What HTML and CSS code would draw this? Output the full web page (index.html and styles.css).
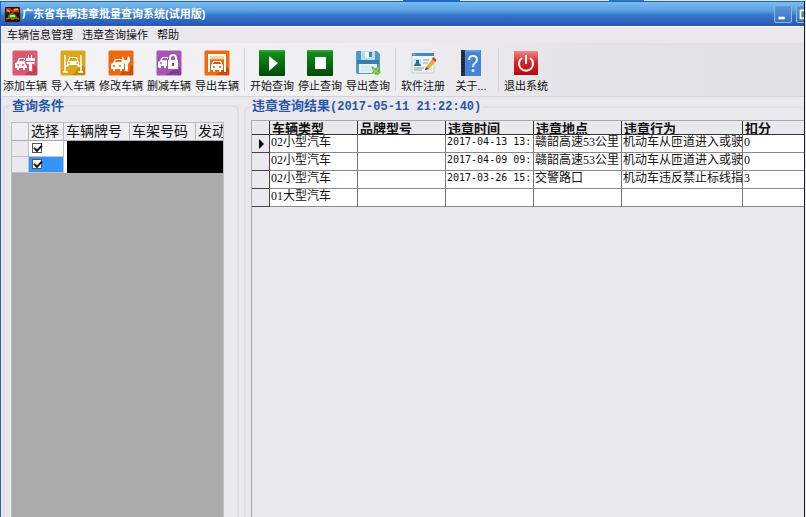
FILE: index.html
```html
<!DOCTYPE html>
<html lang="zh-CN">
<head>
<meta charset="utf-8">
<title>广东省车辆违章批量查询系统(试用版)</title>
<link rel="stylesheet" href="styles.css">
</head>
<body>
<div class="desktop"><i class="tile"></i><i class="tile tile-small"></i></div>
<div class="window">
  <header class="titlebar">
    <svg class="logo" viewBox="0 0 15 15"><rect width="15" height="15" rx="1" fill="#25160a"/><path d="M1 1h4l2 2 3-2 4 1v4l-3-1-3 1-3-2-4 2z" fill="#d52a16"/><path d="M2 3l3 2M9 3l4-1" stroke="#ffb51f" stroke-width="1.5"/><path d="M3 10q1-4 4-4t5 4l-1 2H4z" fill="#2f9a22"/><path d="M5 8h5v2H5z" fill="#d9df55"/><path d="M1 12l3-1M11 11l3 1M6 12h3" stroke="#e44720" stroke-width="1.5"/></svg>
    <h1>广东省车辆违章批量查询系统(试用版)</h1>
    <div class="controls">
      <button class="ctl" aria-label="最小化"><svg viewBox="0 0 18 18"><path d="M4 12h7v3H4z" fill="#fff"/></svg></button>
      <button class="ctl" aria-label="最大化"><svg viewBox="0 0 18 18"><path d="M4 5h10v9H4z" fill="none" stroke="#fff" stroke-width="2"/></svg></button>
    </div>
  </header>
  <nav class="menu"><button>车辆信息管理</button><button>违章查询操作</button><button>帮助</button></nav>
  <div class="toolbar">
    <button class="tool"><svg viewBox="0 0 26 26"><rect x=".5" y=".5" width="25" height="25" rx="1.500" fill="#df5871"/><path d="M13 25l9-11 3 4v7z" fill="#bb4058"/><path d="M3 18v-5l2-1 2-4h6l2 4v6h-2v2h-2v-2H7v2H5v-2z" fill="#fff"/><path d="M7 11l1-2h4l1 2z" fill="#df5871"/><circle cx="6" cy="15" r="1" fill="#df5871"/><circle cx="11" cy="15" r="1" fill="#df5871"/><path d="M13 5h11v8q0 3-3 3v6h-4v-6q-4 0-4-3z" fill="#df5871"/><path d="M14 11V8h2V5h1v3h2V5h1v3h3v3H14zM14 12h9l-1 2h-2v7h-3v-7h-2z" fill="#fff"/></svg><span>添加车辆</span></button>
    <button class="tool"><svg viewBox="0 0 26 26"><rect x=".5" y=".5" width="25" height="25" rx="1.500" fill="#dda719"/><path d="M12 25l10-10 3 3v7z" fill="#b98916"/><path d="M5 5v17M21 5v17M3 22h5M18 22h5M5 16h3M18 16h3" stroke="#fff" stroke-width="1.500"/><path d="M8 11l1-4h8l1 4 1 1v4h-2v-1H9v1H7v-4z" fill="#fff"/><path d="M10 8h6l1 3H9z" fill="#dda719"/><circle cx="9" cy="13" r="1" fill="#dda719"/><circle cx="17" cy="13" r="1" fill="#dda719"/></svg><span>导入车辆</span></button>
    <button class="tool"><svg viewBox="0 0 26 26"><rect x=".5" y=".5" width="25" height="25" rx="1.500" fill="#f06a0d"/><path d="M12 25l9-12 4 4v8z" fill="#cb4d08"/><path d="M3 19v-5l2-1 2-4h7l2 4v6h-2v2h-2v-2H7v2H5v-2z" fill="#fff"/><path d="M7 12l1-2h5l1 2z" fill="#f06a0d"/><circle cx="6" cy="16" r="1" fill="#f06a0d"/><circle cx="12" cy="16" r="1" fill="#f06a0d"/><path d="M14 6h9v8l-2 8h-5v-8z" fill="#f06a0d"/><path d="M15 6l1 4h3l1-4 2 2v3l-2 3v7h-3v-7l-3-3V8z" fill="#fff"/></svg><span>修改车辆</span></button>
    <button class="tool"><svg viewBox="0 0 26 26"><rect x=".5" y=".5" width="25" height="25" rx="1.500" fill="#a456b5"/><path d="M10 25l12-9 3 2v7z" fill="#823b96"/><path d="M2 17v-5l2-1 2-4h6v9h-2v2H8v-2H5v2H3z" fill="#fff"/><path d="M6 10l1-2h4v2z" fill="#a456b5"/><circle cx="5" cy="13" r="1" fill="#a456b5"/><path d="M11 9h12v11H11z" fill="#a456b5"/><path d="M14 12V8a3 3 0 0 1 6 0v4" fill="none" stroke="#fff" stroke-width="2"/><rect x="12" y="10" width="10" height="9" fill="#fff"/><path d="M16 13h2v3h-2z" fill="#823b96"/></svg><span>删减车辆</span></button>
    <button class="tool"><svg viewBox="0 0 26 26"><rect x=".5" y=".5" width="25" height="25" rx="1.500" fill="#f06a0d"/><path d="M12 25l10-8 3 2v6z" fill="#c94b0a"/><path d="M4 4h18v18h-2V9H6v13H4z" fill="#fff"/><path d="M6 7h14M6 9h14" stroke="#f5a568"/><path d="M7 15l1-1 1-3h8l1 3 1 1v5h-2v2h-2v-2h-4v2H9v-2H7z" fill="#fff"/><path d="M10 12h6l1 2H9z" fill="#d95a0a"/><circle cx="10" cy="17" r="1" fill="#d95a0a"/><circle cx="16" cy="17" r="1" fill="#d95a0a"/></svg><span>导出车辆</span></button>
    <i class="sep"></i>
    <button class="tool"><svg viewBox="0 0 26 26"><defs><linearGradient id="green" x2="0" y2="1"><stop stop-color="#149318"/><stop offset=".5" stop-color="#087010"/><stop offset="1" stop-color="#03480a"/></linearGradient></defs><rect width="26" height="26" rx="1" fill="url(#green)"/><path d="M1 1h24" stroke="#50b252"/><path d="M10 6l9 7-9 8z" fill="#fff"/></svg><span>开始查询</span></button>
    <button class="tool"><svg viewBox="0 0 26 26"><rect width="26" height="26" rx="1" fill="url(#green)"/><path d="M1 1h24" stroke="#50b252"/><path d="M8 7h11v12H8z" fill="#fff"/></svg><span>停止查询</span></button>
    <button class="tool"><svg viewBox="0 0 26 26"><path d="M2 1h20l3 3v18q0 2-2 2H3q-2 0-2-2V2z" fill="#4a9cc9"/><path d="M2 10h22v4H2z" fill="#327fac"/><path d="M6 1h14v8q0 1-1 1H7q-1 0-1-1z" fill="#b8dceb"/><path d="M10 2h7v6h-7z" fill="#f7fbfd"/><path d="M14 2h3v5h-3z" fill="#3c87b5"/><path d="M4 14h18v9H4z" fill="#e6f1f5"/><path d="M6 17h13M6 20h11" stroke="#c4dce5"/><path d="M16 16l4 2 4-1v4l2 1-3 3-4-1h-3l2-3z" fill="#78ba3e"/><path d="M18 19l5 4M23 18l-5 6" stroke="#a9d67c"/></svg><span>导出查询</span></button>
    <i class="sep"></i>
    <button class="tool"><svg viewBox="0 0 26 26"><path d="M2 4h22v19H2z" fill="#eff5f8" stroke="#b9cdd8"/><path d="M2 3h22v3H2z" fill="#378fc6"/><circle cx="4" cy="4.500" r="1" fill="#efb43e"/><path d="M4 9h7v7H4z" fill="#bfdef0"/><path d="M6 10h3v3l2 2v1H4v-1l2-2z" fill="#27729f"/><path d="M13 10h6M13 13h5M4 18h10M4 20h8" stroke="#899ca8"/><path d="M16 17l7-9 3 3-7 8-4 1z" fill="#efad2c"/><path d="M22 9l1-2 3 2v2l-1 1z" fill="#dc3c3c"/><path d="M16 17l3 2-4 1z" fill="#504c47"/></svg><span>软件注册</span></button>
    <button class="tool"><svg viewBox="0 0 26 26"><path d="M3 0h20v26H3z" fill="#4583d7"/><path d="M3 0h4v26H3z" fill="#263042"/><path d="M4 3h2M4 6h2M4 9h2M4 12h2M4 15h2M4 18h2M4 21h2" stroke="#111927"/><path d="M7 1h15" stroke="#87afe6"/><path d="M11 10q0-4 4-4t4 4q0 2-3 4-1 1-1 3" fill="none" stroke="#e7f2ff" stroke-width="2"/><circle cx="15" cy="20.500" r="1.500" fill="#e7f2ff"/></svg><span>关于...</span></button>
    <i class="sep"></i>
    <button class="tool"><svg viewBox="0 0 26 26"><defs><linearGradient id="red" x2="0" y2="1"><stop stop-color="#ef8a86"/><stop offset=".45" stop-color="#d9262a"/><stop offset="1" stop-color="#bd050b"/></linearGradient></defs><path d="M1 1h24v24H1z" fill="url(#red)"/><path d="M9 8a7 7 0 1 0 8 0" fill="none" stroke="#fff" stroke-width="2"/><path d="M13 5v9" stroke="#fff" stroke-width="2"/></svg><span>退出系统</span></button>
  </div>
  <main class="content">
    <fieldset class="panel conditions">
      <legend>查询条件</legend>
      <div class="vehicle-list">
        <table class="vehicles">
          <colgroup><col class="v-mark"><col class="v-pick"><col class="v-info"><col class="v-info"><col></colgroup>
          <thead><tr><th></th><th>选择</th><th>车辆牌号</th><th>车架号码</th><th>发动</th></tr></thead>
          <tbody>
            <tr><td class="rowhead"></td><td><input type="checkbox" checked aria-label="选择第一辆"></td><td class="masked" colspan="3"></td></tr>
            <tr><td class="rowhead"></td><td class="selected"><input type="checkbox" checked aria-label="选择第二辆"></td><td class="masked" colspan="3"></td></tr>
          </tbody>
        </table>
      </div>
    </fieldset>
    <fieldset class="panel results">
      <legend>违章查询结果<span class="stamp">(2017-05-11 21:22:40)</span></legend>
      <div class="result-list">
        <table class="violations">
          <colgroup><col class="r-mark"><col class="r-std"><col class="r-std"><col class="r-std"><col class="r-std"><col class="r-act"><col></colgroup>
          <thead><tr><th></th><th><span>车辆类型</span></th><th><span>品牌型号</span></th><th><span>违章时间</span></th><th><span>违章地点</span></th><th><span>违章行为</span></th><th><span>扣分</span></th></tr></thead>
          <tbody>
            <tr><td class="rowhead"><i class="current"></i></td><td>02小型汽车</td><td></td><td class="time">2017-04-13 13:</td><td>赣韶高速53公里</td><td>机动车从匝道进入或驶</td><td>0</td></tr>
            <tr><td class="rowhead"></td><td>02小型汽车</td><td></td><td class="time">2017-04-09 09:</td><td>赣韶高速53公里</td><td>机动车从匝道进入或驶</td><td>0</td></tr>
            <tr><td class="rowhead"></td><td>02小型汽车</td><td></td><td class="time">2017-03-26 15:</td><td>交警路口</td><td>机动车违反禁止标线指</td><td>3</td></tr>
            <tr><td class="rowhead"></td><td>01大型汽车</td><td></td><td></td><td></td><td></td><td></td></tr>
          </tbody>
        </table>
      </div>
    </fieldset>
  </main>
</div>
</body>
</html>
```
FILE: styles.css
```css
* { box-sizing: border-box; }
body {
  margin: 0;
  height: 100vh;
  display: flex;
  flex-direction: column;
  overflow: hidden;
  background: #e9e8ed;
  color: #111;
  font: 11px/14px "Liberation Sans", "Noto Sans CJK SC", sans-serif;
}
button { border: 0; padding: 0; background: none; font: inherit; color: inherit; }
svg { display: block; }

.desktop { flex: none; height: 1px; display: flex; background: #d8e8f2; }
.tile { width: 57px; margin-left: 50%; background: #1668df; }
.tile-small { width: 35px; margin-left: 149px; background: #1287d8; }

.window {
  flex: 1;
  min-height: 0;
  display: flex;
  flex-direction: column;
  margin-right: 1px;
  border-left: 1px solid #2a60bb;
  border-right: 1px solid #181a20;
}

.titlebar {
  flex: none;
  height: 25px;
  display: flex;
  align-items: center;
  gap: 2px;
  padding-left: 4px;
  overflow: hidden;
  border-top: 1px solid #2c63a8;
  background: linear-gradient(#79bcef, #5ba2e4 35%, #3478cb 55%, #2a55b0);
}
.logo { width: 15px; height: 15px; }
.titlebar h1 {
  flex: 1;
  margin: 0;
  color: #fff;
  font-size: 11px;
  line-height: 16px;
  white-space: nowrap;
}
.controls { display: flex; gap: 4px; margin-right: -10px; }
.ctl {
  width: 18px;
  height: 18px;
  border: 1px solid #8fb9e8;
  border-radius: 2px;
  background: linear-gradient(#5d98d9, #3b70c1);
}
.ctl svg { width: 16px; height: 16px; }

.menu {
  flex: none;
  height: 17px;
  display: flex;
  gap: 9px;
  padding-left: 6px;
  border-top: 1px solid #f8f8fa;
  background: #eae8ed;
}

.toolbar {
  flex: none;
  height: 54px;
  display: flex;
  align-items: stretch;
  border-bottom: 1px solid #d5d4d9;
  background: linear-gradient(90deg, #f4f4f6, #efeef1 45%, #e3e3e7 75%, #e2e2e6);
}
.tool {
  width: 48px;
  display: flex;
  flex-direction: column;
  align-items: center;
  gap: 3px;
  padding-top: 7px;
  white-space: nowrap;
}
.tool svg { width: 26px; height: 26px; }
.sep { width: 1px; margin: 5px 3px; background: #d2d2d7; }

.content { flex: 1; min-height: 0; display: flex; gap: 5px; padding: 2px 0 0 2px; }
.panel {
  display: flex;
  flex-direction: column;
  min-width: 0;
  margin: 0;
  padding: 0;
  border: 2px solid #e0dfe5;
  border-bottom: 0;
  border-radius: 5px 5px 0 0;
}
.panel legend {
  margin-left: 0;
  padding: 0 1px;
  color: #2856a8;
  font-size: 13px;
  font-weight: bold;
  line-height: 14px;
}
.stamp { font-family: "Liberation Mono", monospace; font-size: 12px; }
.conditions { flex: none; width: 236px; padding: 9px 13px 0 6px; }
.results { flex: 1; border-right: 0; padding: 6px 0 0 5px; }

table { width: 100%; border-collapse: separate; border-spacing: 0; table-layout: fixed; }
th, td { padding: 0; overflow: hidden; white-space: nowrap; text-align: left; }

.vehicle-list {
  height: 100vh;
  overflow: hidden;
  border: 1px solid #bdbdbd;
  border-bottom: 0;
  background: #ababab;
}
.v-mark { width: 17px; }
.v-pick { width: 35px; }
.v-info { width: 66px; }
.vehicles th {
  height: 18px;
  padding-left: 2px;
  border-right: 1px solid #b5b5ba;
  border-bottom: 1px solid #a9a9ae;
  background: #eeedf1;
  font-size: 14px;
  font-weight: normal;
  line-height: 17px;
}
.vehicles th:last-child { border-right: 0; }
.vehicles td {
  height: 16px;
  padding: 0 0 2px 3px;
  border-right: 1px solid #c2c2c6;
  border-bottom: 1px solid #c2c2c6;
  background: #fff;
}
.vehicles td.rowhead { background: #eae9ee; }
.vehicles td.selected { background: #3395fb; }
.vehicles td.masked { background: #000; border: 0; border-left: 3px solid #fff; }
.vehicles input {
  appearance: none;
  display: block;
  width: 10px;
  height: 10px;
  margin: 0;
  border: 1px solid #555;
  background: #fff;
}
.vehicles input:checked::before {
  content: "";
  display: block;
  width: 6px;
  height: 3px;
  margin: 1px;
  border: solid #111;
  border-width: 0 0 2px 2px;
  transform: rotate(-45deg);
}

.result-list { height: 100vh; border-top: 1px solid #a8a8ad; border-left: 1px solid #a8a8ad; }
.r-mark { width: 18px; }
.r-std { width: 88px; }
.r-act { width: 121px; }
.violations th {
  height: 14px;
  border-right: 1px solid #333;
  border-bottom: 1px solid #333;
  font-size: 13px;
}
.violations th span { display: block; height: 13px; padding-left: 2px; overflow: hidden; line-height: 15px; }
.violations td {
  height: 18px;
  padding-left: 1px;
  border-right: 1px solid #777;
  border-bottom: 1px solid #8a8a8a;
  background: #fff;
  vertical-align: top;
  font: 12px/14px "Liberation Serif", "Noto Sans CJK SC", serif;
}
.violations th:last-child, .violations td:last-child { border-right: 0; }
.violations td.rowhead { border-color: #444; background: #eae9ee; }
.violations td.time { font: 10px/14px "DejaVu Sans Mono", monospace; }
.current {
  display: block;
  width: 0;
  margin: 4px 0 0 6px;
  border: solid transparent;
  border-width: 5px 0 5px 5px;
  border-left-color: #000;
}
```
